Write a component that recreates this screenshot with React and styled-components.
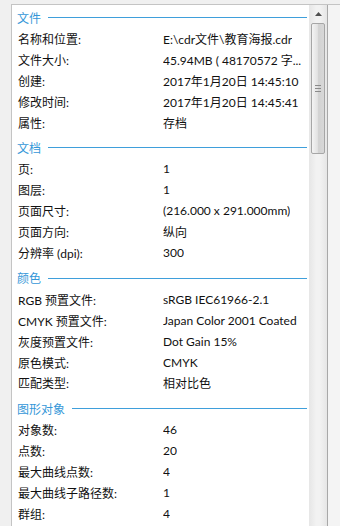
import React from "react";
import styled, { createGlobalStyle } from "styled-components";

const Global = createGlobalStyle`
  html, body { margin: 0; padding: 0; background: #f0f0f0; }
  body { font-family: Lato, "Noto Sans CJK SC", sans-serif; }
`;

const Frame = styled.div`
  width: 340px;
  height: 526px;
  overflow: hidden;
  box-sizing: border-box;
  padding: 4px 0 0 11px;
  display: flex;
  background: #f0f0f0;
`;

const Window = styled.div`
  display: flex;
  border-top: 1px solid #c4c4c4;
  border-left: 1px solid #c4c4c4;
  height: 600px;
`;

const Panel = styled.div`
  width: 297px;
  background: #fff;
  box-sizing: border-box;
  padding: 1px 2px 0 5px;
  font-size: 12px;
  color: #111;
`;

const Section = styled.section`
  padding-bottom: 4px;
`;

const Header = styled.div`
  display: flex;
  align-items: center;
  height: 22px;
  gap: 7px;
  color: #3597d8;
  font-size: 12px;
  &::after {
    content: "";
    flex: 1;
    height: 1px;
    background: #3f9fdb;
    margin-top: 1px;
  }
`;

const Row = styled.div`
  display: flex;
  align-items: center;
  height: 20.9px;
  padding-left: 1px;
  white-space: nowrap;
`;

const Label = styled.span`
  width: 145px;
  flex: none;
`;

const Value = styled.span`
  overflow: hidden;
`;

const Scrollbar = styled.div`
  width: 18px;
  background: linear-gradient(to right, #e6e6e6, #f2f2f2 40%, #f2f2f2 60%, #e6e6e6);
  display: flex;
  flex-direction: column;
  align-items: center;
`;

const ArrowBtn = styled.div`
  height: 18px;
  width: 100%;
  display: flex;
  align-items: center;
  justify-content: center;
`;

const Thumb = styled.div`
  width: 14px;
  height: 131px;
  box-sizing: border-box;
  border: 1px solid #a6a6a6;
  border-radius: 2px;
  background: linear-gradient(to right, #f4f4f4, #e2e2e2 45%, #d2d2d2 55%, #d8d8d8);
  display: flex;
  align-items: center;
  justify-content: center;
`;

const Side = styled.div`
  width: 12px;
  border-left: 1px solid #a8a8a8;
  background: #f4f4f4;
  height: 600px;
`;

const sections = [
  {
    title: "文件",
    rows: [
      ["名称和位置:", "E:\\cdr文件\\教育海报.cdr"],
      ["文件大小:", "45.94MB ( 48170572 字..."],
      ["创建:", "2017年1月20日 14:45:10"],
      ["修改时间:", "2017年1月20日 14:45:41"],
      ["属性:", "存档"],
    ],
  },
  {
    title: "文档",
    rows: [
      ["页:", "1"],
      ["图层:", "1"],
      ["页面尺寸:", "(216.000 x 291.000mm)"],
      ["页面方向:", "纵向"],
      ["分辨率 (dpi):", "300"],
    ],
  },
  {
    title: "颜色",
    rows: [
      ["RGB 预置文件:", "sRGB IEC61966-2.1"],
      ["CMYK 预置文件:", "Japan Color 2001 Coated"],
      ["灰度预置文件:", "Dot Gain 15%"],
      ["原色模式:", "CMYK"],
      ["匹配类型:", "相对比色"],
    ],
  },
  {
    title: "图形对象",
    rows: [
      ["对象数:", "46"],
      ["点数:", "20"],
      ["最大曲线点数:", "4"],
      ["最大曲线子路径数:", "1"],
      ["群组:", "4"],
    ],
  },
];

export default function App() {
  return (
    <>
      <Global />
      <Frame>
        <Window>
          <Panel>
            {sections.map((s) => (
              <Section key={s.title}>
                <Header>{s.title}</Header>
                {s.rows.map(([l, v]) => (
                  <Row key={l}>
                    <Label>{l}</Label>
                    <Value>{v}</Value>
                  </Row>
                ))}
              </Section>
            ))}
          </Panel>
          <Scrollbar>
            <ArrowBtn>
              <svg width="7" height="4" viewBox="0 0 7 4">
                <path d="M0 4 L3.5 0 L7 4 Z" fill="#505050" />
              </svg>
            </ArrowBtn>
            <Thumb>
              <svg width="6" height="7" viewBox="0 0 6 7">
                <path d="M0 0.5H6M0 3.5H6M0 6.5H6" stroke="#8a8a8a" strokeWidth="1" />
              </svg>
            </Thumb>
          </Scrollbar>
          <Side />
        </Window>
      </Frame>
    </>
  );
}
